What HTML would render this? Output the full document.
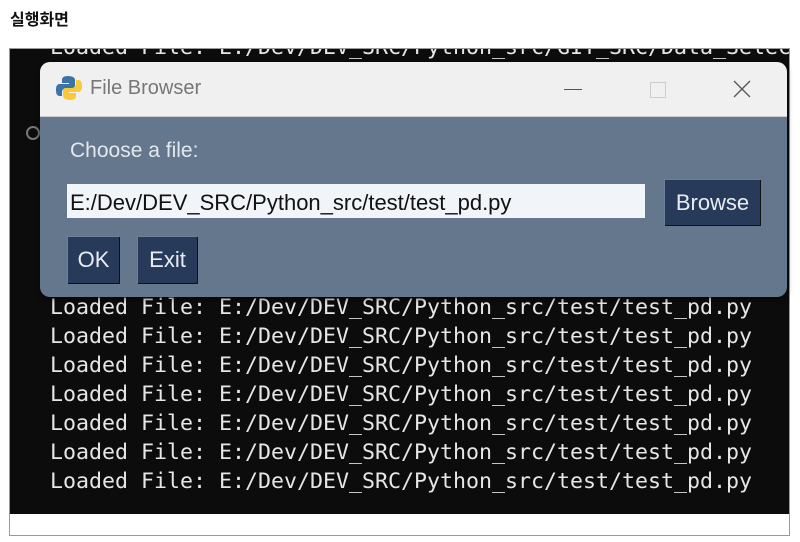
<!DOCTYPE html>
<html><head><meta charset="utf-8"><style>
body{margin:0;width:800px;height:542px;background:#fff;position:relative;overflow:hidden;font-family:"Liberation Sans","Noto Sans CJK KR",sans-serif}
.h{position:absolute;left:10px;top:6px;font-size:16px;font-weight:bold;color:#111}
.frame{position:absolute;left:9px;top:48px;width:779px;height:486px;border:1px solid #999;background:#fff}
.term{position:absolute;left:10px;top:49px;width:779px;height:465px;background:#0c0c0c;overflow:hidden}
.ln{position:absolute;left:40px;font-family:"DejaVu Sans Mono","Liberation Mono",monospace;font-size:21.6px;color:#e6e6e6;white-space:pre;line-height:29px}
.dlg{position:absolute;left:40px;top:62px;width:747px;height:235px;border-radius:10px;background:#64778d;overflow:hidden;box-shadow:0 2px 6px rgba(0,0,0,.5)}
.tb{position:absolute;left:0;top:0;width:100%;height:54px;background:#f0f0f0;border-bottom:1px solid #ccc}
.title{position:absolute;left:50px;top:15px;font-size:20px;color:#777}
.lbl{position:absolute;left:30px;top:77px;font-size:21px;color:#e4e8ee}
.inp{position:absolute;left:27px;top:122px;width:578px;height:34px;background:#f1f4f8;font-size:22px;color:#111;line-height:37px;padding-left:3px;box-sizing:border-box}
.btn{position:absolute;background:#283a5a;color:#e8ecf2;font-size:22px;text-align:center;box-shadow:1px 1px 0 #111;border-top:1px solid #6e819a;border-left:1px solid #6e819a;box-sizing:border-box}
</style></head><body>
<div class="h">실행화면</div>
<div class="frame"></div>
<div class="term">
<div class="ln" style="top:-16px">Loaded File: E:/Dev/DEV_SRC/Python_src/GIT_SRC/Data_Selec</div>
<div style="position:absolute;left:16px;top:77px;width:10px;height:10px;border:2px solid #777;border-radius:50%"></div>
<div class="ln" style="top:244px">Loaded File: E:/Dev/DEV_SRC/Python_src/test/test_pd.py</div>
<div class="ln" style="top:273px">Loaded File: E:/Dev/DEV_SRC/Python_src/test/test_pd.py</div>
<div class="ln" style="top:302px">Loaded File: E:/Dev/DEV_SRC/Python_src/test/test_pd.py</div>
<div class="ln" style="top:331px">Loaded File: E:/Dev/DEV_SRC/Python_src/test/test_pd.py</div>
<div class="ln" style="top:360px">Loaded File: E:/Dev/DEV_SRC/Python_src/test/test_pd.py</div>
<div class="ln" style="top:389px">Loaded File: E:/Dev/DEV_SRC/Python_src/test/test_pd.py</div>
<div class="ln" style="top:418px">Loaded File: E:/Dev/DEV_SRC/Python_src/test/test_pd.py</div>
</div>
<div class="dlg">
<div class="tb">
<svg style="position:absolute;left:15px;top:12px" width="28" height="28" viewBox="0 0 28 28">
<path d="M13 2c-5 0-6 2-6 4v3h7v1H5c-3 0-4 2-4 6s1 6 4 6h2v-4c0-2 2-4 4-4h6c2 0 3-1 3-3V6c0-2-2-4-7-4z" fill="#3a73a8"/>
<path d="M15 26c5 0 6-2 6-4v-3h-7v-1h9c3 0 4-2 4-6s-1-6-4-6h-2v4c0 2-2 4-4 4h-6c-2 0-3 1-3 3v5c0 2 2 4 7 4z" fill="#f7c93b"/>
</svg>
<div class="title">File Browser</div>
<div style="position:absolute;left:524px;top:27px;width:18px;height:1px;background:#555"></div>
<div style="position:absolute;left:610px;top:20px;width:14px;height:14px;border:1px solid #ccc"></div>
<svg style="position:absolute;left:693px;top:18px" width="18" height="18"><path d="M1 1L17 17M17 1L1 17" stroke="#555" stroke-width="1.3"/></svg>
</div>
<div class="lbl">Choose a file:</div>
<div class="inp">E:/Dev/DEV_SRC/Python_src/test/test_pd.py</div>
<div class="btn" style="left:624px;top:117px;width:96px;height:46px;line-height:45px">Browse</div>
<div class="btn" style="left:27px;top:174px;width:52px;height:47px;line-height:46px">OK</div>
<div class="btn" style="left:97px;top:174px;width:60px;height:47px;line-height:46px">Exit</div>
</div>
</body></html>
